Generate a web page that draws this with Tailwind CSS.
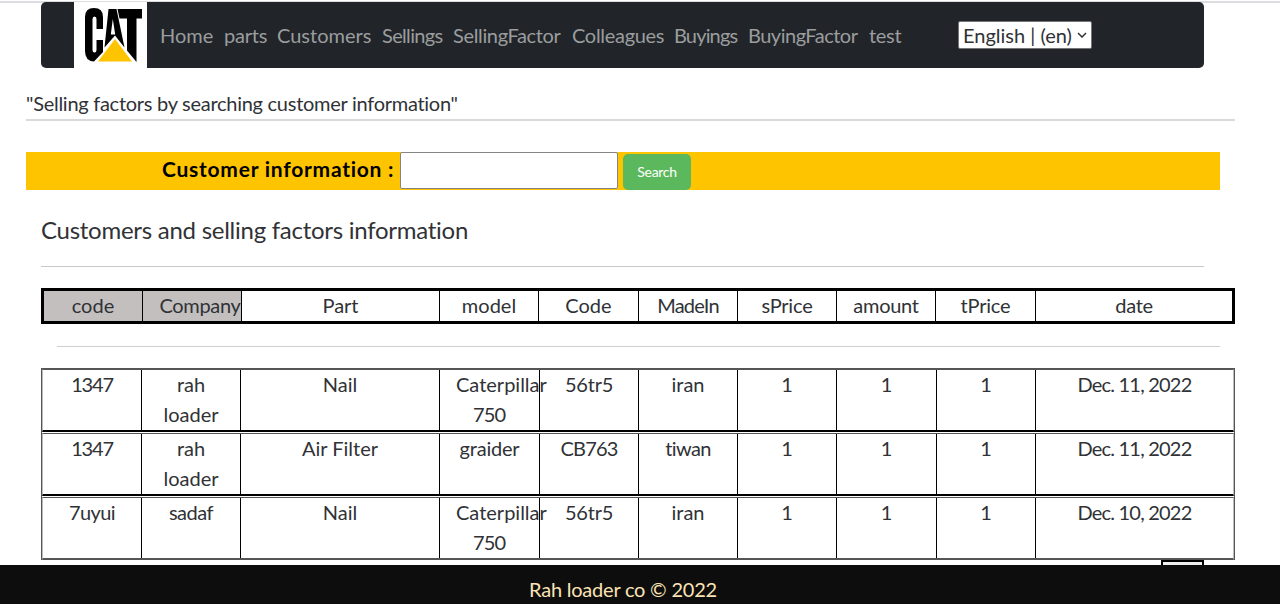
<!DOCTYPE html>
<html lang="en">
<head>
<meta charset="utf-8">
<title>Rah loader</title>
<script src="https://cdn.jsdelivr.net/npm/@tailwindcss/browser@4"></script>
</head>
<body class="h-[604px] overflow-hidden bg-white font-[Lato,'Open_Sans',sans-serif] text-[20px] leading-[30px] text-[#303236]">
<div class="flex h-[565px] flex-col overflow-hidden border-t border-white">
  <div class="h-0.5 shrink-0 bg-[#dcdde0]"></div>
  <nav class="-mt-px ml-[41px] flex h-[66px] w-[1163px] shrink-0 rounded-[5px] bg-[#212529] pl-[33px] text-[#9b9d9e]">
    <a class="h-[66px] w-[73px] bg-white">
      <svg class="block" width="73" height="66" viewBox="0 0 73 66">
        <path d="M11 15Q11 6 20 6Q29 6 29 15V27H22.500V17Q22.500 14.500 20.500 14.500Q18.500 14.500 18.500 17V48Q18.500 50.500 20.500 50.500Q22.500 50.500 22.500 48V38H29V50L20 59.500Q11 59 11 49Z"/>
        <path fill-rule="evenodd" d="M34.500 7H42.500L50.500 45.500L41 33.500L30.500 45.500ZM38.800 17L36.800 32.500H41.200Z"/>
        <path d="M43.500 7H68V16.500H62.500V60L53 48.500V16.500H45.500Z"/>
        <path d="M41 37L58 59.500H24Z" fill="#ffc400"/>
      </svg>
    </a>
    <div class="ml-[13px] flex gap-[11px] pt-[18px] whitespace-nowrap">
      <a class="w-[53px]">Home</a><a class="w-[42px] tracking-[-0.2px]">parts</a><a class="w-[94px]">Customers</a><a class="w-[60px] tracking-[-0.65px]">Sellings</a><a class="w-[108px] tracking-[-0.35px]">SellingFactor</a><a class="w-[91px] tracking-[-0.3px]">Colleagues</a><a class="w-[63px] tracking-[-0.85px]">Buyings</a><a class="w-[110px] tracking-[-0.5px]">BuyingFactor</a><a class="w-[32px] tracking-[-0.3px]">test</a>
    </div>
    <div class="mt-[19px] ml-[57px] flex h-7 w-[134px] items-center rounded-xs border border-[#767676] bg-white pl-1 whitespace-nowrap text-[#303236]">
      <span class="w-[109px]">English | (en)</span>
      <svg class="ml-[5px]" width="10" height="6" viewBox="0 0 10 6" fill="none" stroke="#333" stroke-width="1.500"><path d="M1 1L5 5L9 1"/></svg>
    </div>
  </nav>
  <p class="mt-5 ml-[26px] h-[33px] w-[1209px] shrink-0 border-b-2 border-[#dadada] tracking-[-0.27px]">"Selling factors by searching customer information"</p>
  <form class="mt-[31px] ml-[26px] flex h-[38px] w-[1194px] shrink-0 bg-[#ffc400] pl-[136px] text-black">
    <label class="w-[238px] pt-0.5 text-[21px] font-bold tracking-[0.75px] whitespace-nowrap">Customer information :</label>
    <div class="h-[37px] w-[218px] rounded-xs border border-[#858585] bg-white"></div>
    <div class="mt-0.5 ml-[5px] flex h-9 w-[68px] items-center justify-center rounded-[5px] bg-[#5cb85c] text-[14px] leading-5 tracking-[-0.3px] text-white">Search</div>
  </form>
  <h1 class="mt-[22px] ml-[41px] h-[55px] w-[1163px] shrink-0 border-b border-[#c8c8c8] text-[24px] leading-9 tracking-[-0.26px]">Customers and selling factors information</h1>
  <div class="mt-[21px] ml-[41px] grid h-9 w-[1194px] shrink-0 grid-cols-[99px_99px_198px_99px_100px_99px_99px_99px_100px_1fr] divide-x divide-black border-[3px] border-black text-center leading-7">
    <div class="bg-[#c3bfbe]">code</div><div class="bg-[#c3bfbe] pl-4 tracking-[-0.35px]">Company</div><div>Part</div><div>model</div><div>Code</div><div class="tracking-[-0.8px]">MadeIn</div><div class="tracking-[-0.2px]">sPrice</div><div class="tracking-[-0.3px]">amount</div><div class="tracking-[-0.2px]">tPrice</div><div class="tracking-[-0.3px]">date</div>
  </div>
  <div class="mt-[22px] ml-[57px] h-px w-[1163px] shrink-0 bg-[#cfcfcf]"></div>
  <div class="mt-[21px] ml-[41px] w-[1194px] shrink-0 border-x border-t border-[#555]">
    <div class="grid h-[63px] grid-cols-[99px_99px_199px_100px_99px_99px_99px_100px_99px_1fr] divide-x divide-black border border-b-2 border-x-[#bbb] border-t-[#555] border-b-black text-center leading-[29.500px]">
      <div class="tracking-[-1.2px]">1347</div><div>rah<br>loader</div><div>Nail</div><div class="pl-4 text-left">Caterpillar<br><span class="ml-[17px] tracking-[-0.9px]">750</span></div><div class="tracking-[-0.2px]">56tr5</div><div>iran</div><div>1</div><div>1</div><div>1</div><div class="tracking-[-0.8px]">Dec. 11, 2022</div>
    </div>
    <div class="mt-px grid h-[63px] grid-cols-[99px_99px_199px_100px_99px_99px_99px_100px_99px_1fr] divide-x divide-black border border-b-2 border-x-[#bbb] border-t-[#555] border-b-black text-center leading-[29.500px]">
      <div class="tracking-[-1.2px]">1347</div><div>rah<br>loader</div><div>Air Filter</div><div class="tracking-[-0.2px]">graider</div><div class="tracking-[-0.8px]">CB763</div><div class="tracking-[-0.6px]">tiwan</div><div>1</div><div>1</div><div>1</div><div class="tracking-[-0.8px]">Dec. 11, 2022</div>
    </div>
    <div class="mt-px grid h-[63px] grid-cols-[99px_99px_199px_100px_99px_99px_99px_100px_99px_1fr] divide-x divide-black border border-b-2 border-x-[#bbb] border-t-[#555] border-b-[#555] text-center leading-[29.500px]">
      <div class="tracking-[-0.6px]">7uyui</div><div class="tracking-[-0.5px]">sadaf</div><div>Nail</div><div class="pl-4 text-left">Caterpillar<br><span class="ml-[17px] tracking-[-0.9px]">750</span></div><div class="tracking-[-0.2px]">56tr5</div><div>iran</div><div>1</div><div>1</div><div>1</div><div class="tracking-[-0.8px]">Dec. 10, 2022</div>
    </div>
  </div>
  <div class="ml-[1161px] h-8 w-[43px] shrink-0 border-2 border-black bg-[#efefef]"></div>
</div>
<footer class="h-[39px] bg-[#0d0d0d] pt-[9px] pl-[529px] tracking-[-0.22px] whitespace-nowrap text-[#fbe3b5]">Rah loader co © 2022</footer>
</body>
</html>
